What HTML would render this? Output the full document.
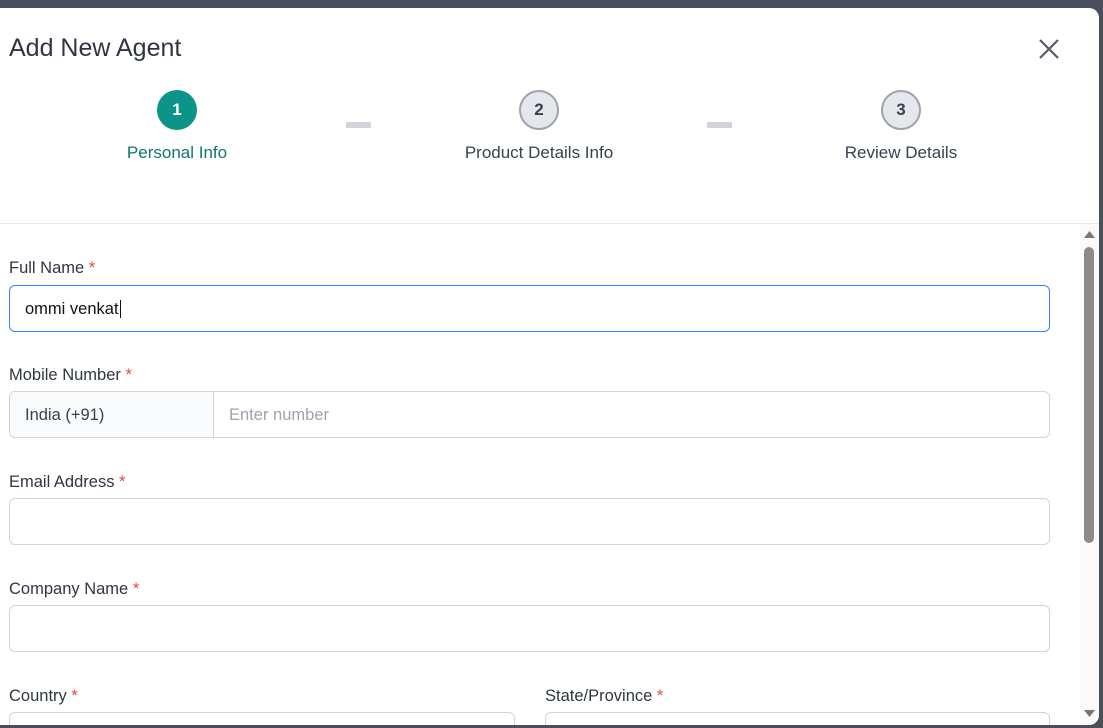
<!DOCTYPE html>
<html><head><style>
*{box-sizing:border-box;margin:0;padding:0}
body{width:1103px;height:728px;background:#4b4f5c;position:relative;overflow:hidden;font-family:"Liberation Sans",sans-serif;color:#374151}
.modal{position:absolute;left:0;top:8px;width:1099px;height:717px;background:#fff;border-radius:0 10px 10px 0;overflow:hidden}
h1{position:absolute;left:9px;top:26px;font-size:25px;font-weight:400;color:#2f3642}
.x{position:absolute;left:1038px;top:30px}
.step{position:absolute;top:82px;width:200px;text-align:center}
.c{width:40px;height:40px;border-radius:50%;margin:0 auto;display:flex;align-items:center;justify-content:center;font-weight:700;font-size:17px}
.step .t{margin-top:13px;font-size:17px}
.dash{position:absolute;top:114px;width:25px;height:6px;background:#d1d5db}
.hr{position:absolute;left:0;top:215px;width:1099px;height:1px;background:#e5e7eb}
.lbl{position:absolute;left:9px;font-size:16.5px;color:#2f3642}
.lbl b{color:#ef4444;font-weight:400}
.in{position:absolute;left:9px;width:1041px;height:47px;border:1px solid #d1d5db;border-radius:6px;font-size:16.5px;padding-left:15px;line-height:47px}
.sb{position:absolute;left:1080px;top:216px;width:19px;height:501px;background:#fafafa}
</style></head><body>
<div class="modal">
<h1>Add New Agent</h1>
<svg class="x" width="22" height="22" viewBox="0 0 22 22"><path d="M2 2L20 20M20 2L2 20" stroke="#555b66" stroke-width="2.2"/></svg>
<div class="step" style="left:77px"><div class="c" style="background:#0d9488;color:#fff">1</div><div class="t" style="color:#0f766e">Personal Info</div></div>
<div class="dash" style="left:346px"></div>
<div class="step" style="left:439px"><div class="c" style="background:#e5e7eb;border:2px solid #9ca3af;color:#374151">2</div><div class="t">Product Details Info</div></div>
<div class="dash" style="left:707px"></div>
<div class="step" style="left:801px"><div class="c" style="background:#e5e7eb;border:2px solid #9ca3af;color:#374151">3</div><div class="t">Review Details</div></div>
<div class="hr"></div>

<div class="lbl" style="top:251px">Full Name <b>*</b></div>
<div class="in" style="top:277px;border-color:#3b82f6;color:#111">ommi venkat<span style="border-left:1px solid #111;margin-left:1px"></span></div>
<div class="lbl" style="top:358px">Mobile Number <b>*</b></div>
<div class="in" style="top:383px;padding:0;overflow:hidden;display:flex"><div style="width:204px;background:#f9fafb;border-right:1px solid #d1d5db;padding-left:15px">India (+91)</div><div style="padding-left:15px;color:#9ca3af">Enter number</div></div>
<div class="lbl" style="top:465px">Email Address <b>*</b></div>
<div class="in" style="top:490px"></div>
<div class="lbl" style="top:572px">Company Name <b>*</b></div>
<div class="in" style="top:597px"></div>
<div class="lbl" style="top:679px">Country <b>*</b></div>
<div class="in" style="top:704px;width:506px"></div>
<div class="lbl" style="top:679px;left:545px">State/Province <b>*</b></div>
<div class="in" style="top:704px;left:545px;width:505px"></div>

<div class="sb">
<svg style="position:absolute;left:4px;top:6px" width="11" height="8"><path d="M0 8L5.5 1L11 8Z" fill="#777"/></svg>
<div style="position:absolute;left:4px;top:23px;width:10px;height:296px;background:#8a8a8a;border-radius:5px"></div>
<svg style="position:absolute;left:4px;top:486px" width="11" height="8"><path d="M0 0L11 0L5.5 7Z" fill="#777"/></svg>
</div>
</div>
</body></html>
